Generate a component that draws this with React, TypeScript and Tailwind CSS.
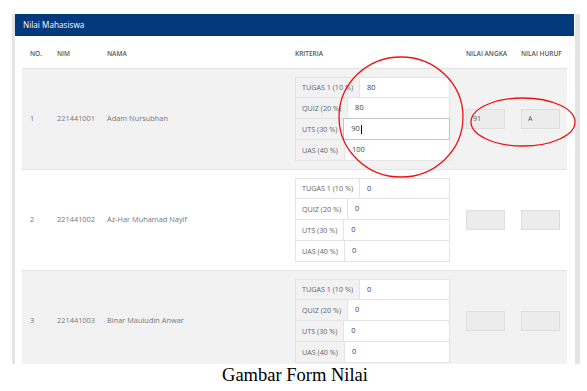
const rows = [
  { no: "1", nim: "221441001", nama: "Adam Nursubhan", nilai: ["80", "80", "90", "100"], angka: "91", huruf: "A", shaded: true, active: true },
  { no: "2", nim: "221441002", nama: "Az-Har Muhamad Nayif", nilai: ["0", "0", "0", "0"], angka: "", huruf: "", shaded: false, active: false },
  { no: "3", nim: "221441003", nama: "Binar Mauludin Anwar", nilai: ["0", "0", "0", "0"], angka: "", huruf: "", shaded: true, active: false },
];

const kriteria = ["TUGAS 1 (10 %)", "QUIZ (20 %)", "UTS (30 %)", "UAS (40 %)"];

const cols = "grid grid-cols-[27px_50px_188px_171px_55px_47px] pl-[8px]";

function KriteriaTable({ nilai, active }: { nilai: string[]; active: boolean }) {
  return (
    <div className="w-[155px] flex flex-col">
      {kriteria.map((k, i) => (
        <div key={k} className={`flex h-[21px] border-x border-[#e4e4e4] ${i === 0 ? "border-t" : ""} border-b`}>
          <div className="flex items-center px-[6px] border-r border-[#e4e4e4] text-[7.2px] text-[#666] whitespace-nowrap">{k}</div>
          <div
            className={`flex-1 flex items-center pl-[7px] bg-white text-[7.5px] ${active ? "text-[#444]" : "text-[#2f4170]"} ${
              active && i === 2 ? "outline outline-1 outline-[#c4c4c4]" : ""
            }`}
          >
            {nilai[i]}
            {active && i === 2 && <span className="ml-[1px] w-px h-[9px] bg-black" />}
          </div>
        </div>
      ))}
    </div>
  );
}

function Box({ value }: { value: string }) {
  return (
    <div className="w-[39px] h-[20px] bg-[#ececec] border border-[#dedede] flex items-center pl-[6px] text-[7px] text-[#555]">
      {value}
    </div>
  );
}

export default function App() {
  return (
    <div className="w-[587px] h-[391px] bg-white relative overflow-hidden font-['Open_Sans',sans-serif]">
      <div className="flex pt-[14px] pl-[12px] pr-[7px] h-[364px]">
        <div className="w-[3px] bg-[#e4e4e4]" />
        <div className="flex-1 flex flex-col overflow-hidden bg-white">
          <div className="h-[22px] shrink-0 bg-[#02387c] flex items-center px-[8px] text-[8.2px] text-white">Nilai Mahasiswa</div>
          <div className="px-[7px]">
            <div className={`${cols} h-[33px] items-end pb-[9px] border-b border-[#e2e2e2] text-[6.5px] font-semibold text-[#555]`}>
              <span>NO.</span>
              <span>NIM</span>
              <span>NAMA</span>
              <span>KRITERIA</span>
              <span>NILAI ANGKA</span>
              <span>NILAI HURUF</span>
            </div>
            {rows.map((r) => (
              <div
                key={r.no}
                className={`${cols} items-center py-[8px] border-b border-[#e4e4e4] text-[7.4px] text-[#777] ${r.shaded ? "bg-[#f2f2f2]" : "bg-white"}`}
              >
                <span>{r.no}</span>
                <span>{r.nim}</span>
                <span>{r.nama}</span>
                <KriteriaTable nilai={r.nilai} active={r.active} />
                <Box value={r.angka} />
                <Box value={r.huruf} />
              </div>
            ))}
          </div>
        </div>
        <div className="w-[5px] ml-[1px] bg-[#e4e4e4]" />
      </div>
      <p className="pt-[2px] pl-[3px] text-center text-[18.5px] leading-none text-black font-['Liberation_Serif',serif]">Gambar Form Nilai</p>

      <svg className="absolute inset-0 pointer-events-none" width="587" height="391">
        <ellipse cx="401" cy="117" rx="62" ry="60" fill="none" stroke="#e11" strokeWidth="1.3" />
        <ellipse cx="523" cy="122" rx="52" ry="24" fill="none" stroke="#e11" strokeWidth="1.3" />
      </svg>
    </div>
  );
}
